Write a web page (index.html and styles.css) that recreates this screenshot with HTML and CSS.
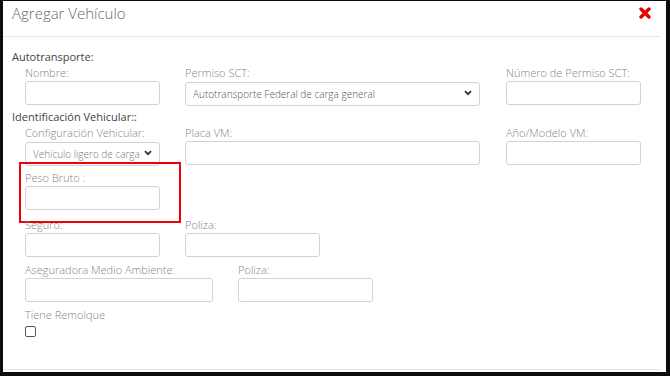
FILE: index.html
```html
<!DOCTYPE html>
<html lang="es">
<head>
  <meta charset="UTF-8">
  <title>Agregar Vehículo</title>
  <link rel="stylesheet" href="styles.css">
</head>
<body>
  <div class="modal">
    <div class="modal-header">
      <h4 class="modal-title">Agregar Vehículo</h4>
      <button class="close" type="button">
        <svg width="12" height="12" viewBox="0 0 12 12"><path d="M2 2 L10 10 M10 2 L2 10" stroke="#e60000" stroke-width="3.4" stroke-linecap="round"/></svg>
      </button>
    </div>
    <div class="modal-body">
      <div class="section-title">Autotransporte:</div>
      <div class="fields">
        <div class="row tight">
          <div class="field w-sm"><label>Nombre:</label><input class="form-control" type="text"></div>
          <div class="field w-lg">
            <label>Permiso SCT:</label>
            <div class="select-wrap">
              <select class="form-control"><option>Autotransporte Federal de carga general</option></select>
              <svg class="chevron" width="8" height="6" viewBox="0 0 8 6"><path d="M1 1.2 L4 4.2 L7 1.2" fill="none" stroke="#333" stroke-width="1.8"/></svg>
            </div>
          </div>
          <div class="field w-sm gap-extra"><label>Número de Permiso SCT:</label><input class="form-control" type="text"></div>
        </div>
      </div>

      <div class="section-title">Identificación Vehicular::</div>
      <div class="fields">
        <div class="row first">
          <div class="field w-sm">
            <label>Configuración Vehicular:</label>
            <div class="select-wrap">
              <select class="form-control light"><option>Vehículo ligero de carga</option></select>
              <svg class="chevron" width="8" height="6" viewBox="0 0 8 6"><path d="M1 1.2 L4 4.2 L7 1.2" fill="none" stroke="#333" stroke-width="1.8"/></svg>
            </div>
          </div>
          <div class="field w-lg"><label>Placa VM:</label><input class="form-control" type="text"></div>
          <div class="field w-sm gap-extra"><label>Año/Modelo VM:</label><input class="form-control" type="text"></div>
        </div>

        <div class="row peso">
          <div class="field w-sm highlighted"><label>Peso Bruto :</label><input class="form-control" type="text"></div>
        </div>

        <div class="row">
          <div class="field w-sm"><label>Seguro:</label><input class="form-control" type="text"></div>
          <div class="field w-sm"><label>Poliza:</label><input class="form-control" type="text"></div>
        </div>

        <div class="row">
          <div class="field w-md"><label>Aseguradora Medio Ambiente:</label><input class="form-control" type="text"></div>
          <div class="field w-sm"><label>Poliza:</label><input class="form-control" type="text"></div>
        </div>

        <div class="row">
          <div class="field">
            <label>Tiene Remolque</label>
            <input class="check" type="checkbox">
          </div>
        </div>
      </div>
    </div>
    <div class="modal-footer"></div>
  </div>
</body>
</html>
```

FILE: styles.css
```css
html, body {
  margin: 0;
  padding: 0;
  height: 100%;
  background-color: #0d0d0d;
  font-family: 'Open Sans', 'Liberation Sans', sans-serif;
  overflow: hidden;
}
.modal {
  box-sizing: border-box;
  margin: 1px 4px 0 3px;
  height: 371px;
  background-color: #fff;
  padding-right: 6px;
  display: flex;
  flex-direction: column;
}
.modal-header {
  display: flex;
  justify-content: space-between;
  align-items: flex-start;
  height: 36px;
  box-sizing: border-box;
  padding: 2px 9px 0 9px;
  border-bottom: 1px solid #e5e5e5;
}
.modal-title {
  margin: 0;
  font-size: 15px;
  font-weight: 300;
  line-height: 20px;
  color: #6a6a6a;
}
.close {
  border: none;
  background: none;
  padding: 0;
  margin-top: 4px;
  width: 12px;
  height: 12px;
  cursor: pointer;
}
.close svg {
  display: block;
}
.modal-body {
  flex: 1;
  padding: 12px 0 0 9px;
}
.section-title {
  font-size: 11px;
  line-height: 15px;
  color: #444;
  margin-bottom: 1px;
}
.fields {
  padding-left: 13px;
}
.row {
  display: flex;
  gap: 25px;
  margin-bottom: 5px;
}
.row.tight {
  margin-bottom: 3px;
}
.row.first {
  margin-bottom: 4px;
}
.row.peso {
  margin-bottom: 7px;
}
.field {
  position: relative;
  display: flex;
  flex-direction: column;
}
.field label {
  font-size: 11px;
  line-height: 15px;
  font-weight: 300;
  color: #858585;
  margin-bottom: 1px;
}
.w-sm { width: 135px; }
.w-md { width: 188px; }
.w-lg { width: 295px; }
.gap-extra { margin-left: 1px; }
.form-control {
  box-sizing: border-box;
  width: 100%;
  height: 24px;
  margin: 0;
  border: 1px solid #d2d2d2;
  border-radius: 3px;
  background: #fff;
  font-family: inherit;
  font-size: 10px;
  font-weight: 300;
  color: #555;
  padding: 0 7px;
}
select.form-control {
  -webkit-appearance: none;
  appearance: none;
}
select.light {
  color: #777;
}
.select-wrap {
  position: relative;
}
.chevron {
  position: absolute;
  right: 8px;
  top: 9px;
}
.highlighted::after {
  content: "";
  position: absolute;
  left: -6px;
  top: -8px;
  width: 158px;
  height: 57px;
  border: 2px solid #f00000;
}
.check {
  -webkit-appearance: none;
  appearance: none;
  width: 11px;
  height: 11px;
  margin: 3px 0 0 0;
  border: 1px solid #555;
  border-radius: 2px;
  background: #fff;
}
.modal-footer {
  height: 2px;
  border-top: 1px solid #e5e5e5;
}
```
